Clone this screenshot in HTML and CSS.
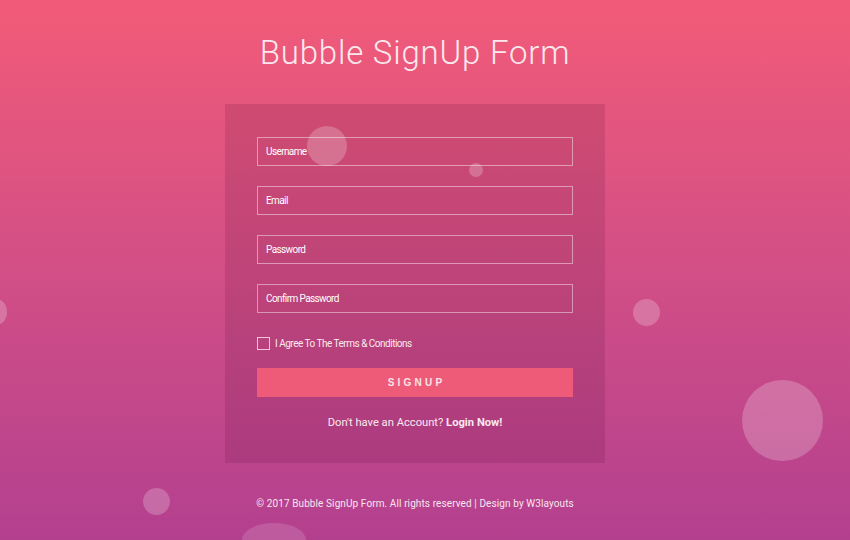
FILE: index.html
```html
<!DOCTYPE html>
<html>
<head>
<meta charset="utf-8">
<link rel="stylesheet" href="styles.css">
</head>
<body>
<div class="page">
  <h1 class="title">Bubble SignUp Form</h1>
  <div class="card">
    <form class="form">
      <div class="field">Username</div>
      <div class="field">Email</div>
      <div class="field">Password</div>
      <div class="field">Confirm Password</div>
      <label class="agree"><span class="box"></span><span>I Agree To The Terms &amp; Conditions</span></label>
      <div class="btn">SIGNUP</div>
      <p class="login">Don't have an Account? <b>Login Now!</b></p>
    </form>
  </div>
  <p class="footer">© 2017 Bubble SignUp Form. All rights reserved | Design by W3layouts</p>
</div>
<span class="bubble b1"></span>
<span class="bubble b2"></span>
<span class="bubble b3"></span>
<span class="bubble b4"></span>
<span class="bubble b5"></span>
<span class="bubble b6"></span>
<span class="bubble b7"></span>
</body>
</html>
```
FILE: styles.css
```css
html, body { margin: 0; padding: 0; height: 100%; overflow: hidden; }
body {
  width: 850px; height: 540px; position: relative;
  background: linear-gradient(to bottom, #f25b78 0%, #d24f86 50%, #b3408f 100%);
  font-family: Roboto, "Liberation Sans", sans-serif; color: #fff;
}
.page { display: flex; flex-direction: column; align-items: center; padding-right: 20px; }
.title {
  margin: 33px 0 0; font-weight: 300; font-size: 33px; letter-spacing: 0.8px;
  line-height: 40px; color: #fbe9ee; height: 71px;
}
.card {
  width: 380px; height: 359px; box-sizing: border-box; padding: 33px 32px 0;
  background: rgba(60, 0, 40, 0.13);
}
.form { display: flex; flex-direction: column; }
.field {
  height: 29px; box-sizing: border-box; border: 1px solid rgba(255,255,255,0.45);
  margin-bottom: 20px; padding: 0 8px; font-size: 10px; letter-spacing: -0.6px;
  line-height: 27px; color: #fff;
}
.agree {
  display: flex; align-items: center; gap: 5px; font-size: 10px; letter-spacing: -0.5px;
  margin-top: 3px; height: 14px; color: #fbe8ee;
}
.box { width: 11px; height: 11px; border: 1px solid #f1c7d8; }
.btn {
  margin-top: 18px; height: 29px; background: #ed5b79; text-align: center;
  font-family: "Liberation Sans", Arial, sans-serif; font-weight: bold; font-size: 10px;
  letter-spacing: 3.2px; text-indent: 3px; line-height: 29px; color: #fbe3ea;
}
.login { margin: 19px 0 0; text-align: center; font-size: 11.2px; color: #fbe8ef; letter-spacing: 0; }
.login b { font-weight: 700; }
.footer { margin: 35px 0 0; font-size: 10px; letter-spacing: 0.1px; color: #f7e6ef; }
.bubble { position: absolute; border-radius: 50%; background: rgba(255,255,255,0.22); }
.b1 { left: 307px; top: 126px; width: 40px; height: 40px; }
.b2 { left: 469px; top: 163px; width: 14px; height: 14px; }
.b3 { left: -14px; top: 299px; width: 21px; height: 26px; }
.b4 { left: 633px; top: 299px; width: 27px; height: 27px; }
.b5 { left: 742px; top: 380px; width: 81px; height: 81px; }
.b6 { left: 143px; top: 488px; width: 27px; height: 27px; }
.b7 { left: 242px; top: 523px; width: 64px; height: 17px; border-radius: 50% 50% 0 0 / 100% 100% 0 0; background: rgba(255,255,255,0.14); }
```
